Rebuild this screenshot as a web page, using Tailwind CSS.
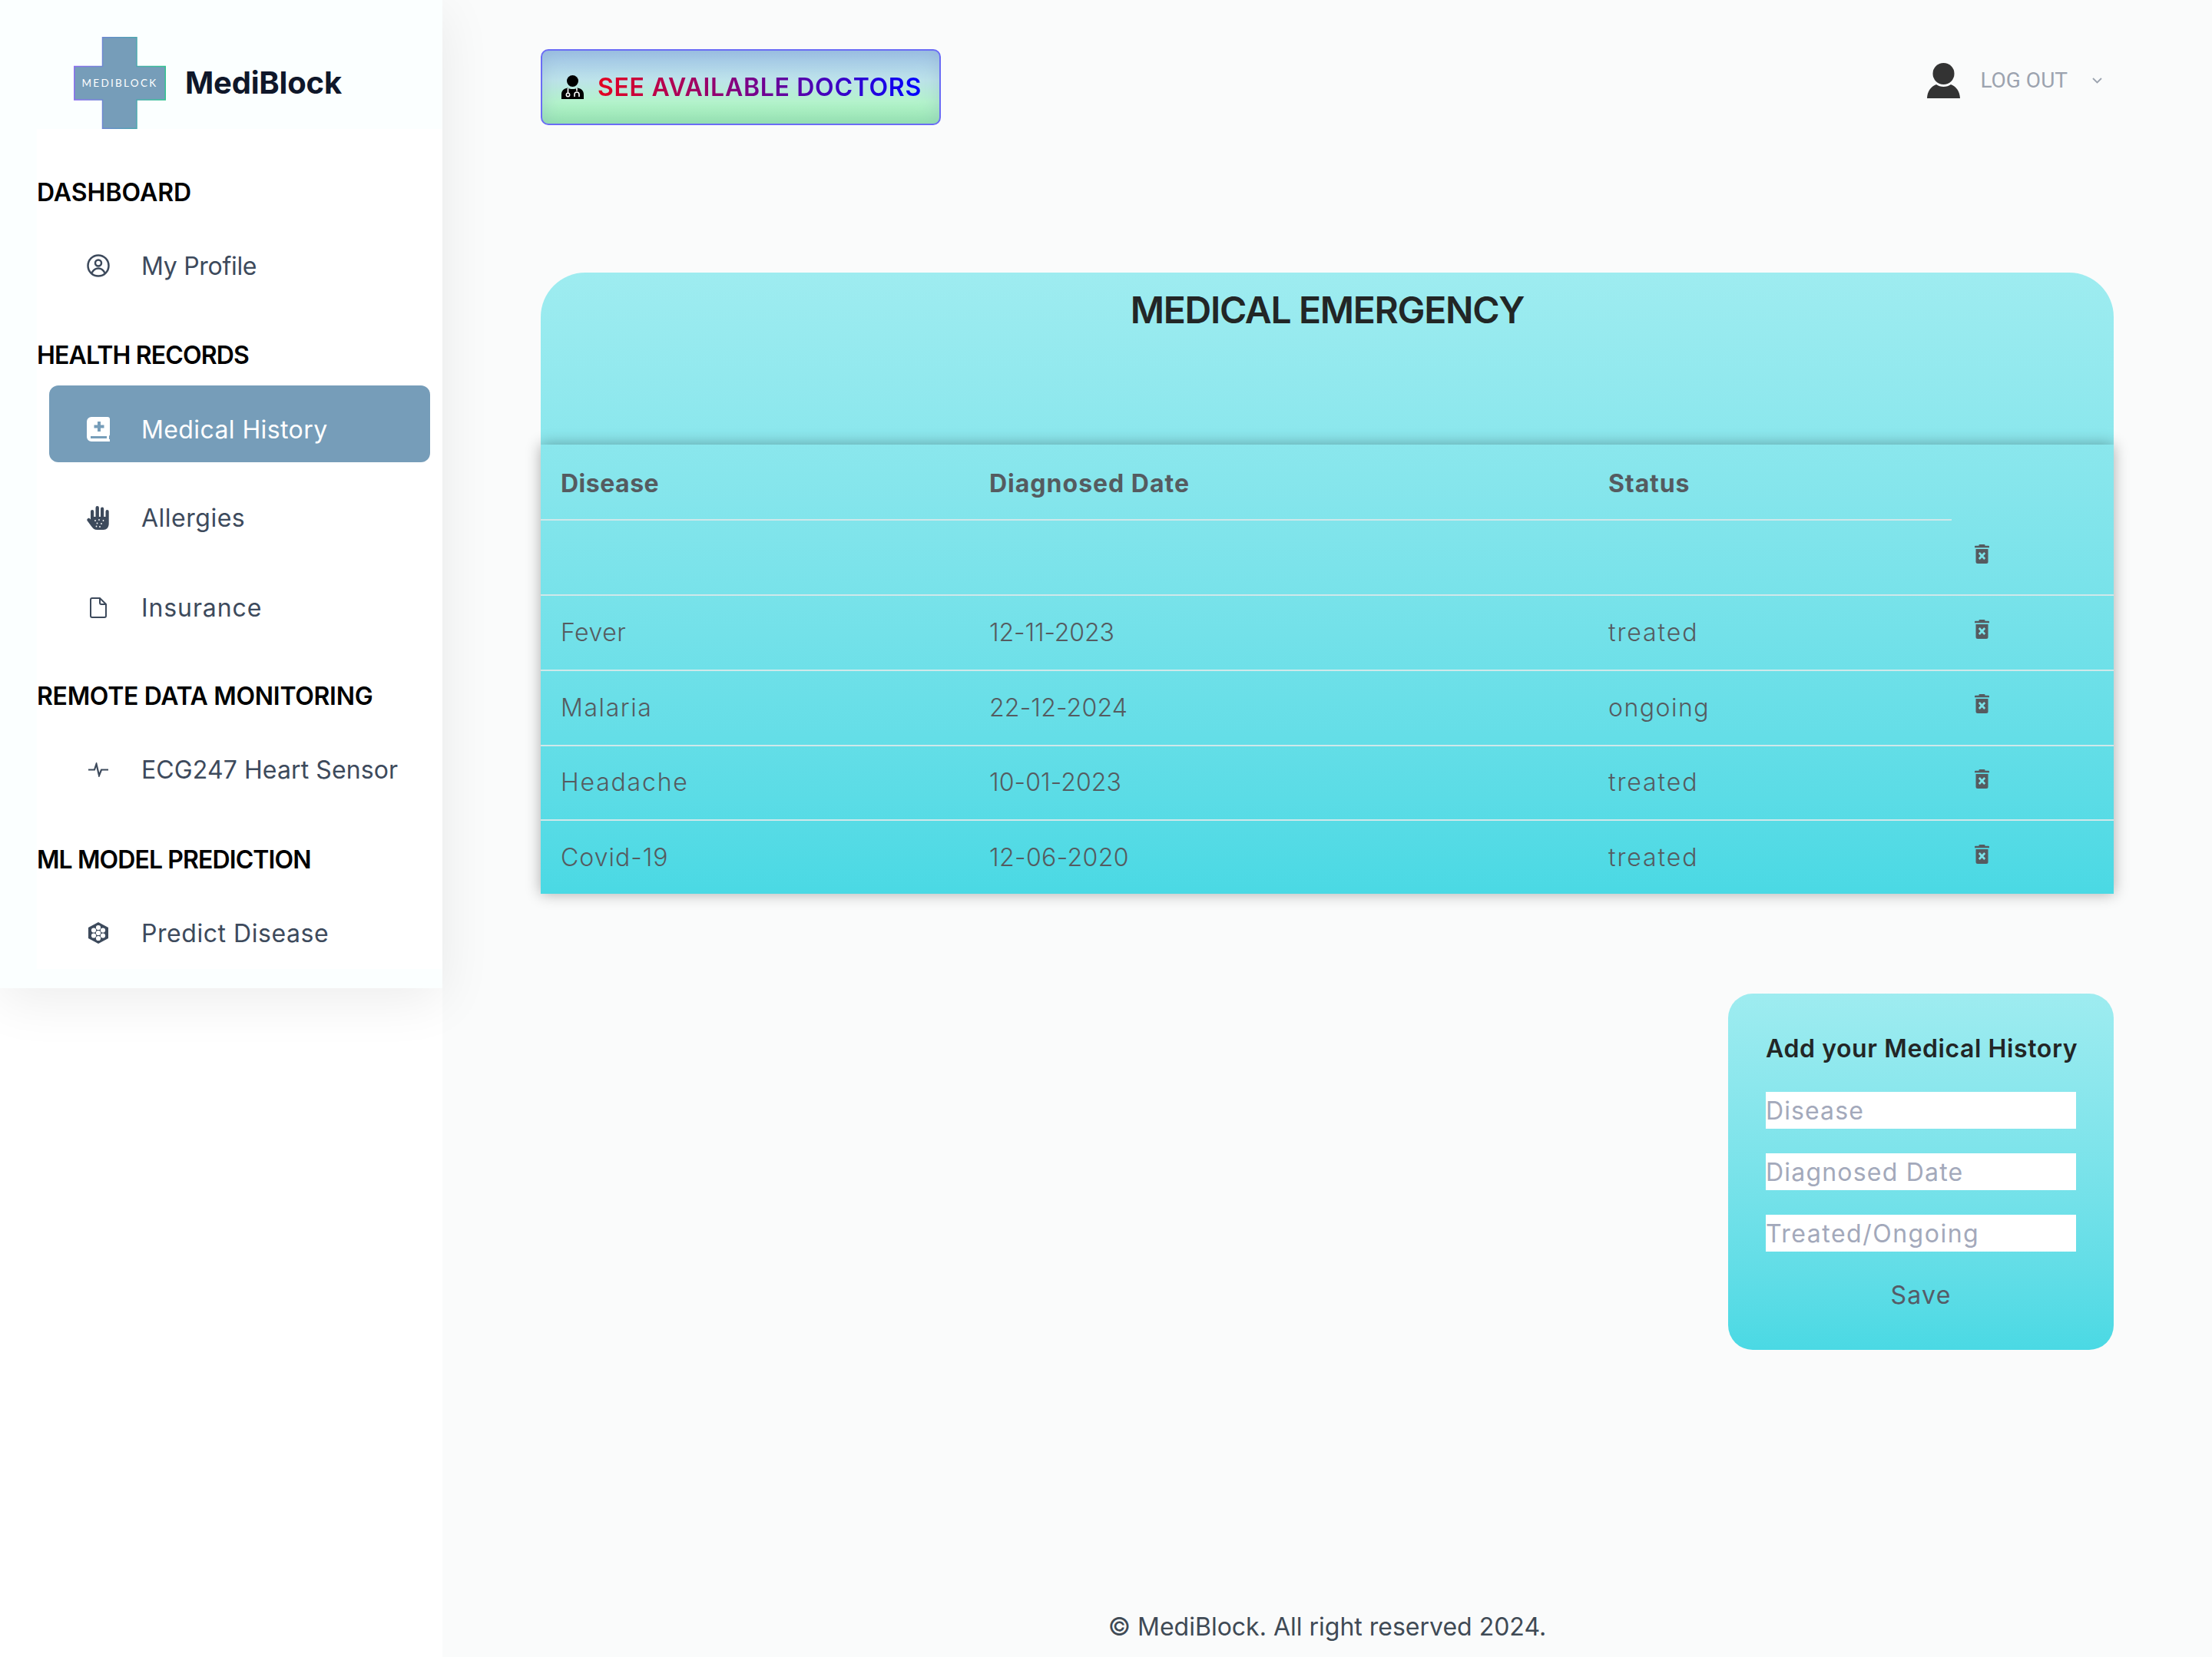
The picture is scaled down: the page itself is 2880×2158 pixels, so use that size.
<!DOCTYPE html>
<html lang="en">
<head>
    <meta charset="UTF-8">
    <meta name="viewport" content="width=device-width, initial-scale=1.0">
    <title>MediBlock - Medical History</title>
    <script src="https://cdn.jsdelivr.net/npm/@tailwindcss/browser@4"></script>
</head>
<body class="bg-white font-['Inter',sans-serif]">

    <svg class="hidden">
        <symbol id="trash" viewBox="0 0 19 25">
            <path fill="#555b60" d="M6.500 0h6a1 1 0 0 1 1 1v.8H18a1 1 0 0 1 1 1v1.400H0V2.800a1 1 0 0 1 1-1h4.500V1a1 1 0 0 1 1-1z"/>
            <path fill="#555b60" d="M1.500 6h16v16.500a2.500 2.500 0 0 1-2.500 2.500H4a2.500 2.500 0 0 1-2.500-2.500z"/>
            <path stroke="#7be4ea" stroke-width="2.600" d="M5.800 11l7.400 8M13.200 11l-7.400 8"/>
        </symbol>
    </svg>

    <div class="flex w-[2880px] h-[2158px] overflow-hidden">

        <!-- sidebar -->
        <aside class="relative z-10 w-[576px] h-[1287px] shrink-0 bg-[#fbffff] shadow-[0_16px_64px_rgba(0,0,0,0.075)]">
            <div class="flex items-center h-[168px] pl-[96px] pt-[48px]">
                <svg class="w-[120px] h-[120px] shrink-0" viewBox="0 0 120 120">
                    <defs>
                        <linearGradient id="logoEdge" x1="0" y1="0" x2="1" y2="0">
                            <stop offset="0" stop-color="#8b6cf0"/>
                            <stop offset="1" stop-color="#2fc48f"/>
                        </linearGradient>
                    </defs>
                    <path fill="#769db9" stroke="url(#logoEdge)" stroke-width="1.500" d="M37.500 .8H82V38.500H119.300V82H82V119.300H37.500V82H.8V38.500H37.500z"/>
                    <text x="60" y="65" text-anchor="middle" fill="#ffffff" font-family="Lato" font-size="13.500" letter-spacing="2.300">MEDIBLOCK</text>
                </svg>
                <span class="ml-[25px] text-[40px] leading-[48px] font-bold tracking-[-0.2px] text-[#0f172a]">MediBlock</span>
            </div>

            <nav class="ml-[48px] h-[1094px] bg-white pt-[57px]">
                <h3 class="h-[48px] pt-[2px] text-[32px] leading-[48px] font-semibold text-black">DASHBOARD</h3>
                <a class="flex items-center h-[100px] w-[496px] ml-[16px] mt-[16px] pt-[14px] pl-[49px] text-[32px] text-[#3d4a5c]">
                    <svg class="w-[30px] h-[30px] shrink-0" viewBox="0 0 30 30" fill="none" stroke="currentColor" stroke-width="2.500">
                        <circle cx="15" cy="15" r="13.500"/>
                        <circle cx="15" cy="11.500" r="4"/>
                        <path d="M6.500 24.500c2-4 5-6 8.500-6s6.500 2 8.500 6"/>
                    </svg>
                    <span class="ml-[41px] pt-[2px] tracking-[-0.3px]">My Profile</span>
                </a>

                <h3 class="h-[48px] pt-[2px] mt-[48px] text-[32px] leading-[48px] font-semibold tracking-[-0.85px] text-black">HEALTH RECORDS</h3>
                <a class="flex items-center h-[100px] w-[496px] ml-[16px] mt-[17px] pt-[14px] pl-[49px] rounded-[12px] bg-[#769db9] text-[32px] text-white">
                    <svg class="w-[30px] h-[32px] shrink-0" viewBox="0 0 30 32">
                        <path fill="#ffffff" d="M6 0H27a3 3 0 0 1 3 3V23a2 2 0 0 1-1 1.700V29h1v3H6a6 6 0 0 1-6-6V6a6 6 0 0 1 6-6z"/>
                        <path fill="#769db9" d="M14 6h4v4.500h4.500v4H18V19h-4v-4.500H9.500v-4H14zM5 25h21v3H5z"/>
                    </svg>
                    <span class="ml-[41px] pt-[2px] tracking-[0.4px]">Medical History</span>
                </a>
                <a class="flex items-center h-[100px] w-[496px] ml-[16px] mt-[15px] pt-[14px] pl-[49px] text-[32px] text-[#3d4a5c]">
                    <svg class="w-[30px] h-[31px] shrink-0" viewBox="0 0 30 31">
                        <path fill="currentColor" d="M5 7a2.100 2.100 0 0 1 4.200 0v7h2.300V2.200a2.200 2.200 0 0 1 4.400 0V14H18V3.700a2.100 2.100 0 0 1 4.200 0V14h2.300V7a2.100 2.100 0 0 1 4.200 0v16c0 5-3 8-7 8h-8c-4 0-6-2-8-5L.5 19c-1-2 1.500-4 3-3L5 17.500z"/>
                        <g fill="#ffffff"><circle cx="11" cy="19" r=".9"/><circle cx="16" cy="18" r=".9"/><circle cx="21.500" cy="19" r=".9"/><circle cx="13.500" cy="22.500" r=".9"/><circle cx="19" cy="23" r=".9"/><circle cx="12.500" cy="26.500" r=".9"/><circle cx="17" cy="27" r=".9"/></g>
                    </svg>
                    <span class="ml-[41px] pt-[2px] tracking-[0.5px]">Allergies</span>
                </a>
                <a class="flex items-center h-[100px] w-[496px] ml-[16px] mt-[17px] pt-[14px] pl-[53px] text-[32px] text-[#3d4a5c]">
                    <svg class="w-[22px] h-[27px] shrink-0" viewBox="0 0 22 27" fill="none" stroke="currentColor" stroke-width="2">
                        <path d="M3 1h10l8 8v15a2 2 0 0 1-2 2H3a2 2 0 0 1-2-2V3a2 2 0 0 1 2-2z"/>
                        <path d="M13 1v6a2 2 0 0 0 2 2h6"/>
                    </svg>
                    <span class="ml-[45px] pt-[2px] tracking-[0.9px]">Insurance</span>
                </a>

                <h3 class="h-[48px] pt-[2px] mt-[47px] text-[32px] leading-[48px] font-semibold tracking-[-0.3px] text-black">REMOTE DATA MONITORING</h3>
                <a class="flex items-center h-[100px] w-[496px] ml-[16px] mt-[16px] pt-[14px] pl-[51px] text-[32px] text-[#3d4a5c]">
                    <svg class="w-[26px] h-[19px] shrink-0" viewBox="0 0 26 19" fill="none" stroke="currentColor" stroke-width="2.200">
                        <path d="M0 9.500h8L10.500 2 14 17l3-7.500h9"/>
                    </svg>
                    <span class="ml-[43px] pt-[2px] tracking-[0.1px]">ECG247 Heart Sensor</span>
                </a>

                <h3 class="h-[48px] pt-[2px] mt-[49px] text-[32px] leading-[48px] font-semibold tracking-[-0.9px] text-black">ML MODEL PREDICTION</h3>
                <a class="flex items-center h-[100px] w-[496px] ml-[16px] mt-[16px] pt-[14px] pl-[51px] text-[32px] text-[#3d4a5c]">
                    <svg class="w-[26px] h-[28px] shrink-0" viewBox="0 0 26 28">
                        <path fill="currentColor" d="M13 0l13 7v14l-13 7-13-7V7z"/>
                        <g fill="#ffffff"><circle cx="13" cy="14" r="3.100"/><circle cx="13" cy="7" r="3.100"/><circle cx="13" cy="21" r="3.100"/><circle cx="7" cy="10.500" r="3.100"/><circle cx="19" cy="10.500" r="3.100"/><circle cx="7" cy="17.500" r="3.100"/><circle cx="19" cy="17.500" r="3.100"/></g>
                    </svg>
                    <span class="ml-[43px] pt-[2px] tracking-[0.55px]">Predict Disease</span>
                </a>
            </nav>
        </aside>

        <!-- main -->
        <main class="flex flex-col flex-1 bg-[#fafbfb] pl-[128px] pr-[128px] pt-[64px]">
            <div class="flex justify-between items-start">
                <button class="flex items-center w-[521px] h-[99px] pl-[25px] rounded-[10px] border-2 border-[#6a6cf5] bg-[linear-gradient(180deg,#9fc3e8_0%,#bde3ea_40%,#b4f3cc_70%,#98eab0_100%)] shadow-[inset_0_0_26px_rgba(130,160,190,0.35)]">
                    <svg class="w-[29px] h-[31px] shrink-0" viewBox="0 0 29 31">
                        <circle cx="14.500" cy="7.500" r="7.500" fill="#000000"/>
                        <path fill="#000000" d="M0 31v-6c0-5 3-7.500 8-8.500 4 2 9 2 13 0 5 1 8 3.500 8 8.500v6z"/>
                        <path fill="none" stroke="#ffffff" stroke-width="1.600" d="M8.500 17v6M20 17v3.500M17 28v-3a3 3 0 0 1 6 0v3"/>
                        <circle cx="8.500" cy="25.500" r="2.200" fill="none" stroke="#ffffff" stroke-width="1.500"/>
                    </svg>
                    <span class="ml-[18px] text-[32px] leading-[48px] font-semibold tracking-[0.7px] whitespace-nowrap bg-linear-to-r/srgb from-[#e5001f] to-[#0000ff] bg-clip-text text-transparent">SEE AVAILABLE DOCTORS</span>
                </button>

                <div class="flex items-center mt-[18px] pr-[15px]">
                    <svg class="w-[43px] h-[46px] shrink-0" viewBox="0 0 43 46">
                        <circle cx="21.500" cy="14" r="14" fill="#333333"/>
                        <path fill="#333333" d="M0 46c.5-9 4.500-15 12-18 5 4 14 4 19 0 7.500 3 11.500 9 12 18z"/>
                    </svg>
                    <span class="ml-[26px] font-['Roboto',sans-serif] text-[28px] leading-[40px] text-[#9ca3af]">LOG OUT</span>
                    <svg class="ml-[32px] w-[13px] h-[8px] shrink-0" viewBox="0 0 13 8" fill="none" stroke="#9ca3af" stroke-width="1.800">
                        <path d="M1 1l5.500 5.500L12 1"/>
                    </svg>
                </div>
            </div>

            <!-- medical emergency card -->
            <section class="mt-[192px] h-[809px] rounded-t-[58px] bg-linear-to-b from-[#9eecf0] to-[#4ad9e4]">
                <h1 class="pt-[17px] h-[224px] text-center text-[48px] leading-[64px] font-semibold tracking-[-1.3px] text-[#222626]">MEDICAL EMERGENCY</h1>
                <div class="h-[585px] shadow-[0_0_18px_rgba(0,0,0,0.32)] text-[#555b60] text-[32px] leading-[48px] font-light">
                    <div class="grid grid-cols-[558px_806px_473px_1fr] h-[99px] font-bold">
                        <div class="pl-[26px] pt-[27px] border-b-2 border-[#cfe8ea] tracking-[0.5px]">Disease</div>
                        <div class="pl-[26px] pt-[27px] border-b-2 border-[#cfe8ea] tracking-[1px]">Diagnosed Date</div>
                        <div class="pl-[26px] pt-[27px] border-b-2 border-[#cfe8ea] tracking-[0.9px]">Status</div>
                    </div>
                    <div class="grid grid-cols-[558px_806px_473px_1fr] h-[96px]">
                        <div class="col-start-4 mt-[31px] ml-[30px]"><svg class="w-[19px] h-[25px]"><use href="#trash"/></svg></div>
                    </div>
                    <div class="grid grid-cols-[558px_806px_473px_1fr] h-[98px] pt-[24px] border-t-2 border-[#cfe8ea]">
                        <div class="pl-[26px] tracking-[0.5px]">Fever</div>
                        <div class="pl-[26px] tracking-[-0.1px]">12-11-2023</div>
                        <div class="pl-[26px] tracking-[1.9px]">treated</div>
                        <div class="mt-[7px] ml-[30px]"><svg class="w-[19px] h-[25px]"><use href="#trash"/></svg></div>
                    </div>
                    <div class="grid grid-cols-[558px_806px_473px_1fr] h-[98px] pt-[24px] border-t-2 border-[#cfe8ea]">
                        <div class="pl-[26px] tracking-[1.6px]">Malaria</div>
                        <div class="pl-[26px] tracking-[0.2px]">22-12-2024</div>
                        <div class="pl-[26px] tracking-[1.5px]">ongoing</div>
                        <div class="mt-[6px] ml-[30px]"><svg class="w-[19px] h-[25px]"><use href="#trash"/></svg></div>
                    </div>
                    <div class="grid grid-cols-[558px_806px_473px_1fr] h-[97px] pt-[23px] border-t-2 border-[#cfe8ea]">
                        <div class="pl-[26px] tracking-[1.8px]">Headache</div>
                        <div class="pl-[26px] tracking-[0.1px]">10-01-2023</div>
                        <div class="pl-[26px] tracking-[1.9px]">treated</div>
                        <div class="mt-[7px] ml-[30px]"><svg class="w-[19px] h-[25px]"><use href="#trash"/></svg></div>
                    </div>
                    <div class="grid grid-cols-[558px_806px_473px_1fr] h-[97px] pt-[24px] border-t-2 border-[#cfe8ea]">
                        <div class="pl-[26px] tracking-[1px]">Covid-19</div>
                        <div class="pl-[26px] tracking-[0.4px]">12-06-2020</div>
                        <div class="pl-[26px] tracking-[1.9px]">treated</div>
                        <div class="mt-[7px] ml-[30px]"><svg class="w-[19px] h-[25px]"><use href="#trash"/></svg></div>
                    </div>
                </div>
            </section>

            <!-- add form -->
            <form class="self-end flex flex-col w-[502px] mt-[130px] px-[49px] pt-[48px] pb-[47px] rounded-[32px] bg-linear-to-b from-[#9eecf0] to-[#4ad9e4]">
                <h2 class="text-[32px] leading-[48px] font-semibold tracking-[0.6px] text-[#222626] whitespace-nowrap">Add your Medical History</h2>
                <input class="mt-[32px] w-full h-[48px] pt-[2px] bg-white text-[32px] tracking-[1.1px] outline-none placeholder:text-[#a3a9bb]" placeholder="Disease">
                <input class="mt-[32px] w-full h-[48px] pt-[2px] bg-white text-[32px] tracking-[1.2px] outline-none placeholder:text-[#a3a9bb]" placeholder="Diagnosed Date">
                <input class="mt-[32px] w-full h-[48px] pt-[2px] bg-white text-[32px] tracking-[1.5px] outline-none placeholder:text-[#a3a9bb]" placeholder="Treated/Ongoing">
                <button type="button" class="mt-[33px] text-[32px] leading-[48px] tracking-[1.3px] text-[#555b66]">Save</button>
            </form>

            <footer class="mt-auto pb-[15px] text-center text-[32px] leading-[48px] text-[#3f4a55]">© MediBlock. All right reserved 2024.</footer>
        </main>
    </div>

</body>
</html>
